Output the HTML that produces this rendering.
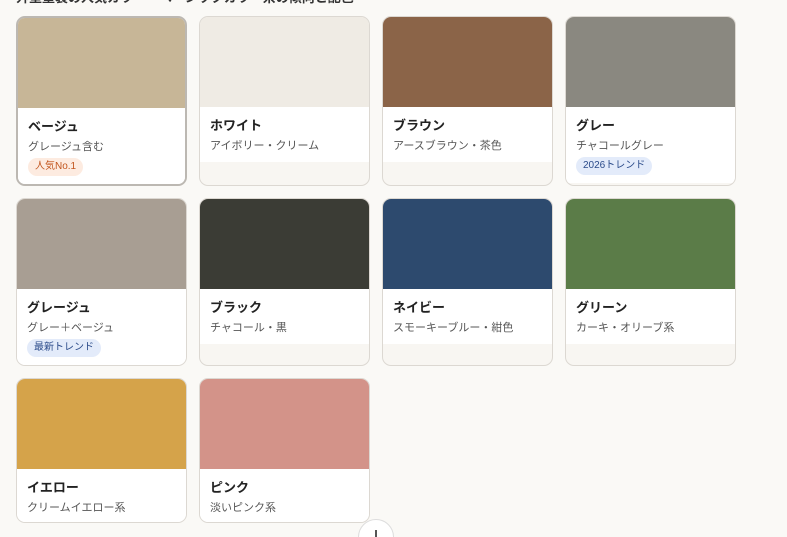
<!DOCTYPE html><html><head><meta charset="utf-8"><style>
html,body{margin:0;width:787px;height:537px;overflow:hidden}
body{background:#faf9f6;font-family:"Liberation Sans","Noto Sans CJK JP",sans-serif;position:relative}
.c{position:absolute;width:171px;border:1px solid #dcd8d2;border-radius:9px;overflow:hidden;background:#f8f6f2;box-sizing:border-box}
.c.sel{border:2px solid #bcb8b2}
.sw{height:90px}
.b{background:#fff;padding:10px 10px 8px}
.t{font-size:13px;font-weight:bold;color:#222;line-height:18px}
.s{font-size:11px;color:#555;line-height:16px;margin-top:3px}
.g{display:inline-block;font-size:10px;line-height:18px;padding:0 7px;border-radius:9px;margin-top:3px}
.o{background:#fdebe0;color:#c2551d}.bl{background:#e3ebfa;color:#2b4b8a}
.top{position:absolute;top:-13px;left:16px;font-size:13px;color:#333;font-weight:bold}
.btn{position:absolute;left:358px;top:519px;width:36px;height:36px;border-radius:50%;background:#fff;border:1px solid #ddd;box-sizing:border-box}
.btn:after{content:"";position:absolute;left:16px;top:10px;width:1.5px;height:10px;background:#555}
</style></head><body>
<div class="top">外壁塗装の人気カラー　ベーシックカラー系の傾向と配色</div>
<div class="c sel" style="left:16px;top:16px;height:170px"><div class="sw" style="background:#c7b697"></div><div class="b"><div class="t">ベージュ</div><div class="s">グレージュ含む</div><span class="g o">人気No.1</span></div></div>
<div class="c" style="left:199px;top:16px;height:170px"><div class="sw" style="background:#efebe4"></div><div class="b"><div class="t">ホワイト</div><div class="s">アイボリー・クリーム</div></div></div>
<div class="c" style="left:382px;top:16px;height:170px"><div class="sw" style="background:#8b6448"></div><div class="b"><div class="t">ブラウン</div><div class="s">アースブラウン・茶色</div></div></div>
<div class="c" style="left:565px;top:16px;height:170px"><div class="sw" style="background:#8a8880"></div><div class="b"><div class="t">グレー</div><div class="s">チャコールグレー</div><span class="g bl">2026トレンド</span></div></div>
<div class="c" style="left:16px;top:198px;height:168px"><div class="sw" style="background:#a89e93"></div><div class="b"><div class="t">グレージュ</div><div class="s">グレー＋ベージュ</div><span class="g bl">最新トレンド</span></div></div>
<div class="c" style="left:199px;top:198px;height:168px"><div class="sw" style="background:#3b3c35"></div><div class="b"><div class="t">ブラック</div><div class="s">チャコール・黒</div></div></div>
<div class="c" style="left:382px;top:198px;height:168px"><div class="sw" style="background:#2d4a6e"></div><div class="b"><div class="t">ネイビー</div><div class="s">スモーキーブルー・紺色</div></div></div>
<div class="c" style="left:565px;top:198px;height:168px"><div class="sw" style="background:#5b7c48"></div><div class="b"><div class="t">グリーン</div><div class="s">カーキ・オリーブ系</div></div></div>
<div class="c" style="left:16px;top:378px;height:145px"><div class="sw" style="background:#d5a34a"></div><div class="b"><div class="t">イエロー</div><div class="s">クリームイエロー系</div></div></div>
<div class="c" style="left:199px;top:378px;height:145px"><div class="sw" style="background:#d39389"></div><div class="b"><div class="t">ピンク</div><div class="s">淡いピンク系</div></div></div>
<div class="btn"></div>
</body></html>
